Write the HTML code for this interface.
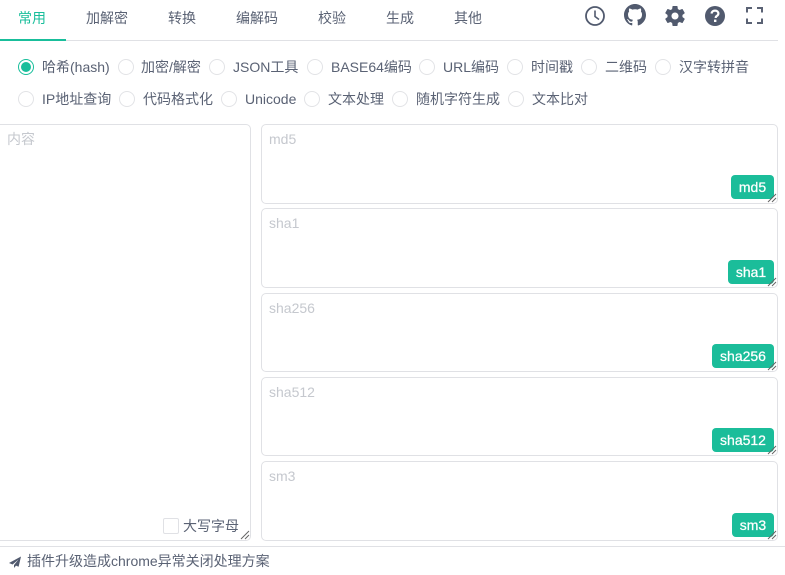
<!DOCTYPE html>
<html><head><meta charset="utf-8">
<style>
html,body{margin:0;padding:0;background:#fff}
body{position:relative;width:785px;height:575px;overflow:hidden;font-family:"Liberation Sans","Noto Sans CJK SC",sans-serif;font-size:14px;color:#5a6274}
.a,.t,.r,.l,.b,.ta,.ph,.g{position:absolute}
.t{top:8px;line-height:20px;white-space:nowrap}
.r{width:16px;height:16px;box-sizing:border-box;border:1.5px solid #e2e3e6;border-radius:50%;background:#fff}
.l{line-height:20px;white-space:nowrap}
.ta{border:1px solid #e0e1e5;border-radius:5px;box-sizing:border-box;background:#fff}
.ph{color:#c5c8ce;line-height:20px;white-space:nowrap}
.b{background:#1bbd9a;color:#fff;border-radius:4px;height:24px;line-height:24px;text-align:center;right:11px;-webkit-text-stroke:.25px #fff}
svg{position:absolute}
</style></head><body>
<div class="a" style="left:0;top:40px;width:778px;height:1px;background:#e0e1e5"></div>
<div class="a" style="left:0;top:39px;width:66px;height:2px;background:#19be9b"></div>
<div class="t" style="left:18px;color:#19be9b">常用</div>
<div class="t" style="left:86px">加解密</div>
<div class="t" style="left:168px">转换</div>
<div class="t" style="left:236px">编解码</div>
<div class="t" style="left:318px">校验</div>
<div class="t" style="left:386px">生成</div>
<div class="t" style="left:454px">其他</div>

<svg style="left:584px;top:4.5px" width="22" height="22" viewBox="0 0 22 22"><circle cx="11" cy="11" r="9" fill="none" stroke="#515a6e" stroke-width="1.8"/><path d="M11 5.5V11.5L15 14.5" fill="none" stroke="#515a6e" stroke-width="1.6"/></svg>
<svg style="left:624px;top:4px" width="22" height="22" viewBox="0 0 16 16"><path fill="#515a6e" d="M8 0C3.58 0 0 3.58 0 8c0 3.54 2.29 6.53 5.47 7.59.4.07.55-.17.55-.38 0-.19-.01-.82-.01-1.49-2.01.37-2.53-.49-2.69-.94-.09-.23-.48-.94-.82-1.13-.28-.15-.68-.52-.01-.53.63-.01 1.08.58 1.23.82.72 1.21 1.87.87 2.33.66.07-.52.28-.87.51-1.07-1.78-.2-3.64-.89-3.64-3.95 0-.87.31-1.59.82-2.15-.08-.2-.36-1.02.08-2.12 0 0 .67-.21 2.2.82.64-.18 1.32-.27 2-.27s1.36.09 2 .27c1.53-1.04 2.2-.82 2.2-.82.44 1.1.16 1.92.08 2.12.51.56.82 1.27.82 2.15 0 3.07-1.87 3.75-3.65 3.95.29.25.54.73.54 1.48 0 1.07-.01 1.93-.01 2.2 0 .21.15.46.55.38A8.01 8.01 0 0 0 16 8c0-4.42-3.58-8-8-8z"/></svg>
<svg style="left:663px;top:3.5px" width="24" height="24" viewBox="0 0 24 24"><path fill="#515a6e" d="M19.43 12.98c.04-.32.07-.64.07-.98s-.03-.66-.07-.98l2.11-1.65c.19-.15.24-.42.12-.64l-2-3.46c-.12-.22-.39-.3-.61-.22l-2.49 1c-.52-.4-1.08-.73-1.69-.98l-.38-2.65C14.46 2.18 14.25 2 14 2h-4c-.25 0-.46.18-.49.42l-.38 2.65c-.61.25-1.17.59-1.69.98l-2.49-1c-.23-.09-.49 0-.61.22l-2 3.46c-.13.22-.07.49.12.64l2.11 1.65c-.04.32-.07.65-.07.98s.03.66.07.98l-2.11 1.65c-.19.15-.24.42-.12.64l2 3.46c.12.22.39.3.61.22l2.49-1c.52.4 1.08.73 1.69.98l.38 2.65c.03.24.24.42.49.42h4c.25 0 .46-.18.49-.42l.38-2.65c.61-.25 1.17-.59 1.69-.98l2.49 1c.23.09.49 0 .61-.22l2-3.46c.12-.22.07-.49-.12-.64l-2.11-1.65zM12 15.5c-1.93 0-3.5-1.57-3.5-3.5s1.57-3.5 3.5-3.5 3.5 1.57 3.5 3.5-1.57 3.5-3.5 3.5z"/></svg>
<svg style="left:704px;top:4.5px" width="22" height="22" viewBox="0 0 22 22"><circle cx="11" cy="11" r="10" fill="#515a6e"/><path d="M7.6 8.6C7.7 6.6 9.2 5.6 11 5.6c2 0 3.4 1.2 3.4 2.9 0 1.4-.8 2-1.7 2.6-.8.5-1 .9-1 1.9" fill="none" stroke="#fff" stroke-width="2.2"/><rect x="10" y="14.6" width="2.4" height="2.4" fill="#fff"/></svg>
<svg style="left:745px;top:6px" width="20" height="20" viewBox="0 0 20 20"><path d="M2 6.5V2H7M12 2H17V6.5M17 12.5V17H12M7 17H2V12.5" fill="none" stroke="#5a6274" stroke-width="2"/></svg>

<div class="r" style="left:18px;top:59px;border-color:#19be9b"></div>
<div class="a" style="left:21px;top:62px;width:10px;height:10px;border-radius:50%;background:#19be9b"></div>
<div class="l" style="left:42px;top:57px">哈希(hash)</div>
<div class="r" style="left:118px;top:59px"></div><div class="l" style="left:141px;top:57px">加密/解密</div>
<div class="r" style="left:209px;top:59px"></div><div class="l" style="left:233px;top:57px">JSON工具</div>
<div class="r" style="left:307px;top:59px"></div><div class="l" style="left:331px;top:57px">BASE64编码</div>
<div class="r" style="left:419px;top:59px"></div><div class="l" style="left:443px;top:57px">URL编码</div>
<div class="r" style="left:507px;top:59px"></div><div class="l" style="left:531px;top:57px">时间戳</div>
<div class="r" style="left:581px;top:59px"></div><div class="l" style="left:605px;top:57px">二维码</div>
<div class="r" style="left:655px;top:59px"></div><div class="l" style="left:679px;top:57px">汉字转拼音</div>

<div class="r" style="left:18px;top:91px"></div><div class="l" style="left:42px;top:89px">IP地址查询</div>
<div class="r" style="left:119px;top:91px"></div><div class="l" style="left:143px;top:89px">代码格式化</div>
<div class="r" style="left:221px;top:91px"></div><div class="l" style="left:245px;top:89px">Unicode</div>
<div class="r" style="left:304px;top:91px"></div><div class="l" style="left:328px;top:89px">文本处理</div>
<div class="r" style="left:392px;top:91px"></div><div class="l" style="left:416px;top:89px">随机字符生成</div>
<div class="r" style="left:508px;top:91px"></div><div class="l" style="left:532px;top:89px">文本比对</div>

<div class="ta" style="left:-10px;top:124px;width:261px;height:417px"></div>
<div class="ph" style="left:7px;top:129px">内容</div>
<div class="a" style="left:163px;top:518px;width:14px;height:14px;border:1px solid #e0e1e5;border-radius:2px"></div>
<div class="l" style="left:183px;top:516px">大写字母</div>

<div class="ta" style="left:261px;top:124px;width:517px;height:80px"></div>
<div class="ph" style="left:269px;top:129px">md5</div>
<div class="b" style="top:175px;width:43px">md5</div>
<div class="ta" style="left:261px;top:208px;width:517px;height:80px"></div>
<div class="ph" style="left:269px;top:213px">sha1</div>
<div class="b" style="top:260px;width:46px">sha1</div>
<div class="ta" style="left:261px;top:293px;width:517px;height:79px"></div>
<div class="ph" style="left:269px;top:298px">sha256</div>
<div class="b" style="top:344px;width:62px">sha256</div>
<div class="ta" style="left:261px;top:377px;width:517px;height:79px"></div>
<div class="ph" style="left:269px;top:382px">sha512</div>
<div class="b" style="top:428px;width:62px">sha512</div>
<div class="ta" style="left:261px;top:461px;width:517px;height:80px"></div>
<div class="ph" style="left:269px;top:466px">sm3</div>
<div class="b" style="top:513px;width:42px">sm3</div>

<svg style="left:240px;top:530px" width="10" height="10"><path d="M1 9L9 1M5 9L9 5" stroke="#666" stroke-width="1"/></svg>
<svg style="left:767px;top:193px" width="10" height="10"><path d="M1 9L9 1M5 9L9 5" stroke="#666" stroke-width="1"/></svg>
<svg style="left:767px;top:277px" width="10" height="10"><path d="M1 9L9 1M5 9L9 5" stroke="#666" stroke-width="1"/></svg>
<svg style="left:767px;top:361px" width="10" height="10"><path d="M1 9L9 1M5 9L9 5" stroke="#666" stroke-width="1"/></svg>
<svg style="left:767px;top:445px" width="10" height="10"><path d="M1 9L9 1M5 9L9 5" stroke="#666" stroke-width="1"/></svg>
<svg style="left:767px;top:530px" width="10" height="10"><path d="M1 9L9 1M5 9L9 5" stroke="#666" stroke-width="1"/></svg>

<div class="a" style="left:0;top:546px;width:785px;height:1px;background:#e0e1e5"></div>
<svg style="left:9px;top:556px" width="12" height="12" viewBox="0 0 12 12"><path d="M12 .5L0 7l3.6 1.5L9.5 3.5 5 9v3l2-2.4 2.6 1.1z" fill="#515a6e"/></svg>
<div class="l" style="left:27px;top:551px">插件升级造成chrome异常关闭处理方案</div>
</body></html>
